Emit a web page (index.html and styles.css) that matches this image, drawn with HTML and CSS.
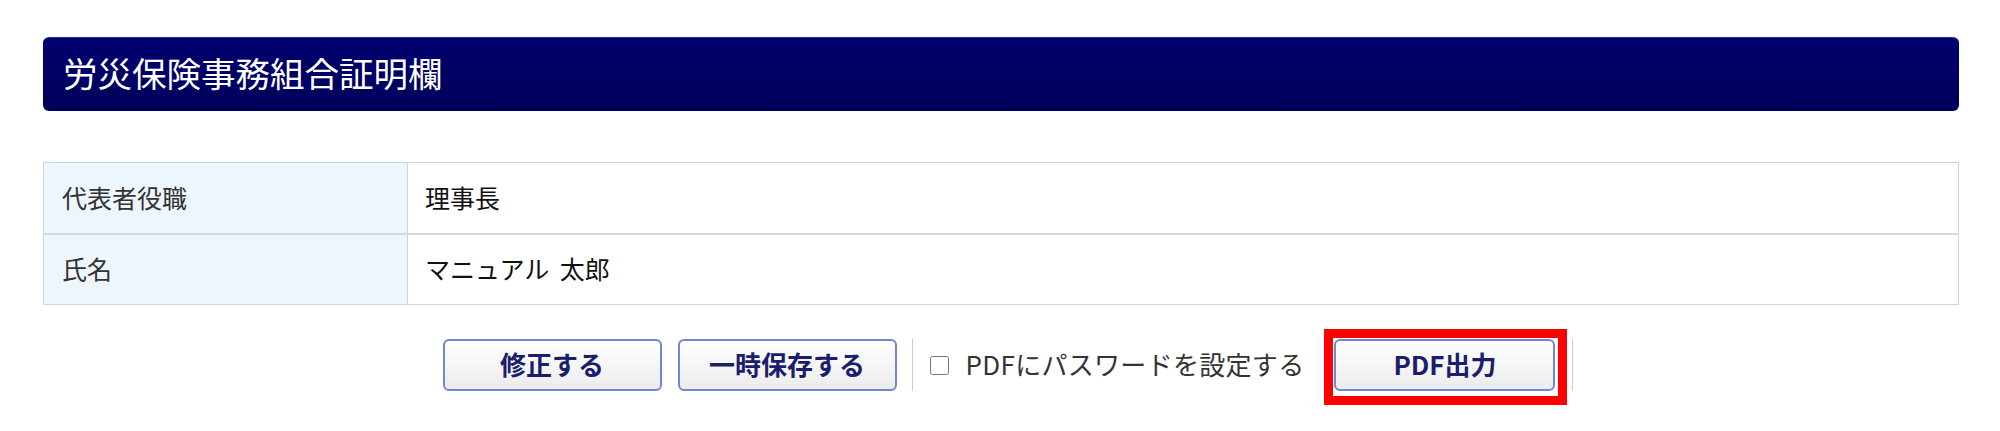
FILE: index.html
```html
<!DOCTYPE html>
<html lang="ja">
<head>
<meta charset="utf-8">
<title>労災保険事務組合証明欄</title>
<link rel="stylesheet" href="styles.css">
</head>
<body>
<div class="page">
  <h2 class="section-title">労災保険事務組合証明欄</h2>
  <table class="info-table">
    <tr>
      <th>代表者役職</th>
      <td>理事長</td>
    </tr>
    <tr>
      <th>氏名</th>
      <td class="name-cell">マニュアル 太郎</td>
    </tr>
  </table>
  <div class="actions">
    <button class="btn" type="button">修正する</button>
    <button class="btn btn-second" type="button">一時保存する</button>
    <span class="sep"></span>
    <label class="pw-option"><input class="pw-check" type="checkbox"><span class="pw-text">PDFにパスワードを設定する</span></label>
    <span class="highlight"><button class="btn btn-pdf" type="button">PDF出力</button></span>
    <span class="sep sep-last"></span>
  </div>
</div>
</body>
</html>
```
FILE: styles.css
```css
* { box-sizing: border-box; }
html, body { margin: 0; padding: 0; background: #fff; }
body {
  font-family: "Noto Sans CJK JP", "Noto Sans", sans-serif;
  font-size: 25px;
  color: #333;
}
.page {
  padding: 37px 41px 41px 43px;
  min-height: 431px;
}
.section-title {
  margin: 0;
  height: 74px;
  display: flex;
  align-items: center;
  padding: 0 0 4px 20px;
  border-radius: 6px;
  border-top: 1px solid #2a2a86;
  background: linear-gradient(#000070, #00005a);
  color: #fff;
  font-size: 34.5px;
  font-weight: normal;
  line-height: 1;
}
.info-table {
  margin-top: 51px;
  width: 100%;
  border-collapse: collapse;
  border: 1px solid #d4d4d4;
}
.info-table th,
.info-table td {
  height: 71px;
  padding: 0 18px 2px;
  text-align: left;
  vertical-align: middle;
  font-weight: normal;
  border-left: 1px solid #d4d4d4;
  line-height: 1.2;
}
.info-table tr + tr th,
.info-table tr + tr td {
  border-top: 2px solid #d8d8d8;
}
.info-table th {
  width: 364px;
  background: #edf5fd;
  color: #333;
}
.info-table td {
  color: #111;
  padding-left: 17px;
}
.name-cell { word-spacing: 5px; }
.actions {
  margin-top: 34px;
  display: flex;
  justify-content: center;
  align-items: center;
  padding-left: 14px;
}
.btn {
  width: 219px;
  height: 52px;
  padding: 0 0 3px;
  border: 2px solid #7386cf;
  border-radius: 6px;
  background: linear-gradient(#ffffff, #ececec);
  color: #1b1e6c;
  font-family: "Noto Sans CJK JP", "Noto Sans", sans-serif;
  font-size: 26px;
  font-weight: bold;
  line-height: 1;
}
.btn-pdf { width: 221px; }
.btn-second { margin-left: 16px; }
.sep {
  width: 1px;
  height: 52px;
  background: #cccccc;
  margin-left: 15px;
}
.sep-last { margin-left: 17px; }
.pw-option {
  display: flex;
  align-items: center;
  margin-left: 17px;
  color: #333;
  font-size: 26px;
  line-height: 1;
}
.pw-check {
  width: 19px;
  height: 19px;
  margin: 0 17px 0 0;
}
.pw-text {
  padding-bottom: 3px;
  letter-spacing: 0.3px;
}
.highlight {
  display: flex;
  border: 9px solid #ff0000;
  padding: 1px 3px 5px 1px;
  margin: -10px -12px -14px 20px;
}
```
